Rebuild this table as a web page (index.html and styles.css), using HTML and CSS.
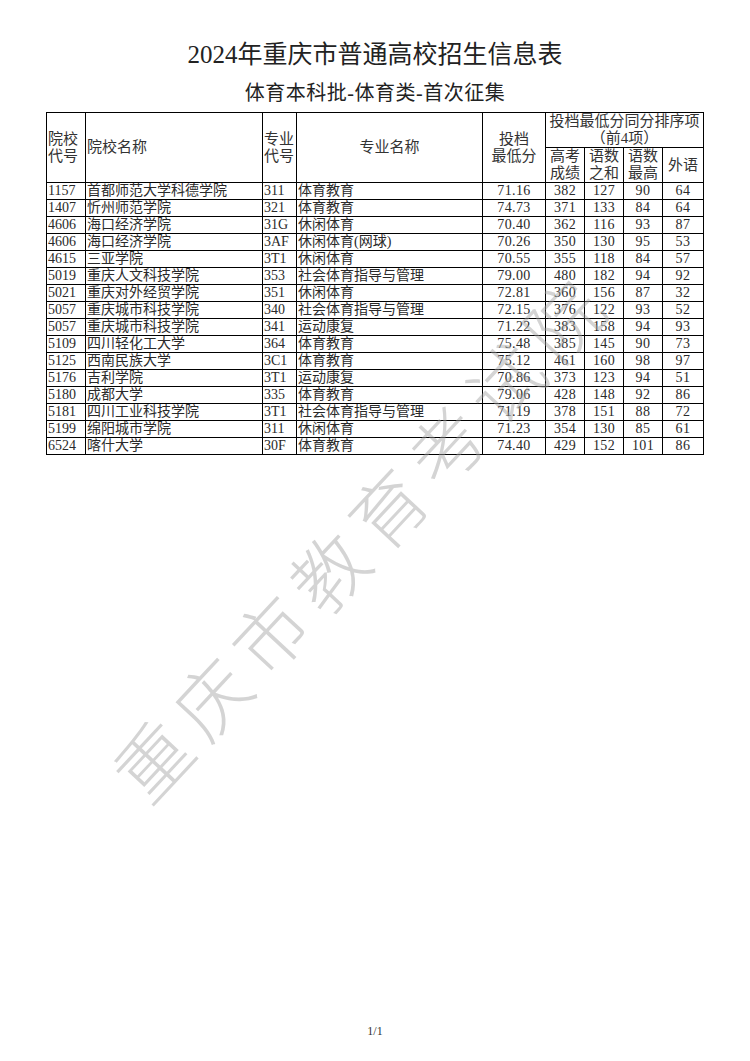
FILE: index.html
```html
<!DOCTYPE html>
<html lang="zh-CN">
<head>
<meta charset="utf-8">
<title>2024年重庆市普通高校招生信息表</title>
<link rel="stylesheet" href="styles.css">
</head>
<body>
<div class="page">
  <h1 class="title">2024年重庆市普通高校招生信息表</h1>
  <h2 class="subtitle">体育本科批-体育类-首次征集</h2>
  <table class="grid">
    <colgroup>
      <col class="c-code"><col class="c-school"><col class="c-mcode"><col class="c-major">
      <col class="c-score"><col class="c-s"><col class="c-s"><col class="c-s"><col class="c-last">
    </colgroup>
    <thead>
      <tr class="h1">
        <th rowspan="2" class="left">院校<br>代号</th>
        <th rowspan="2" class="left">院校名称</th>
        <th rowspan="2" class="left">专业<br>代号</th>
        <th rowspan="2">专业名称</th>
        <th rowspan="2">投档<br>最低分</th>
        <th colspan="4">投档最低分同分排序项<br>（前4项）</th>
      </tr>
      <tr class="h2">
        <th>高考<br>成绩</th>
        <th>语数<br>之和</th>
        <th>语数<br>最高</th>
        <th>外语</th>
      </tr>
    </thead>
    <tbody>
      <tr><td>1157</td><td>首都师范大学科德学院</td><td>311</td><td>体育教育</td><td class="n">71.16</td><td class="n">382</td><td class="n">127</td><td class="n">90</td><td class="n">64</td></tr>
      <tr><td>1407</td><td>忻州师范学院</td><td>321</td><td>体育教育</td><td class="n">74.73</td><td class="n">371</td><td class="n">133</td><td class="n">84</td><td class="n">64</td></tr>
      <tr><td>4606</td><td>海口经济学院</td><td>31G</td><td>休闲体育</td><td class="n">70.40</td><td class="n">362</td><td class="n">116</td><td class="n">93</td><td class="n">87</td></tr>
      <tr><td>4606</td><td>海口经济学院</td><td>3AF</td><td>休闲体育(网球)</td><td class="n">70.26</td><td class="n">350</td><td class="n">130</td><td class="n">95</td><td class="n">53</td></tr>
      <tr><td>4615</td><td>三亚学院</td><td>3T1</td><td>休闲体育</td><td class="n">70.55</td><td class="n">355</td><td class="n">118</td><td class="n">84</td><td class="n">57</td></tr>
      <tr><td>5019</td><td>重庆人文科技学院</td><td>353</td><td>社会体育指导与管理</td><td class="n">79.00</td><td class="n">480</td><td class="n">182</td><td class="n">94</td><td class="n">92</td></tr>
      <tr><td>5021</td><td>重庆对外经贸学院</td><td>351</td><td>休闲体育</td><td class="n">72.81</td><td class="n">360</td><td class="n">156</td><td class="n">87</td><td class="n">32</td></tr>
      <tr><td>5057</td><td>重庆城市科技学院</td><td>340</td><td>社会体育指导与管理</td><td class="n">72.15</td><td class="n">376</td><td class="n">122</td><td class="n">93</td><td class="n">52</td></tr>
      <tr><td>5057</td><td>重庆城市科技学院</td><td>341</td><td>运动康复</td><td class="n">71.22</td><td class="n">383</td><td class="n">158</td><td class="n">94</td><td class="n">93</td></tr>
      <tr><td>5109</td><td>四川轻化工大学</td><td>364</td><td>体育教育</td><td class="n">75.48</td><td class="n">385</td><td class="n">145</td><td class="n">90</td><td class="n">73</td></tr>
      <tr><td>5125</td><td>西南民族大学</td><td>3C1</td><td>体育教育</td><td class="n">75.12</td><td class="n">461</td><td class="n">160</td><td class="n">98</td><td class="n">97</td></tr>
      <tr><td>5176</td><td>吉利学院</td><td>3T1</td><td>运动康复</td><td class="n">70.86</td><td class="n">373</td><td class="n">123</td><td class="n">94</td><td class="n">51</td></tr>
      <tr><td>5180</td><td>成都大学</td><td>335</td><td>体育教育</td><td class="n">79.06</td><td class="n">428</td><td class="n">148</td><td class="n">92</td><td class="n">86</td></tr>
      <tr><td>5181</td><td>四川工业科技学院</td><td>3T1</td><td>社会体育指导与管理</td><td class="n">71.19</td><td class="n">378</td><td class="n">151</td><td class="n">88</td><td class="n">72</td></tr>
      <tr><td>5199</td><td>绵阳城市学院</td><td>311</td><td>休闲体育</td><td class="n">71.23</td><td class="n">354</td><td class="n">130</td><td class="n">85</td><td class="n">61</td></tr>
      <tr><td>6524</td><td>喀什大学</td><td>30F</td><td>体育教育</td><td class="n">74.40</td><td class="n">429</td><td class="n">152</td><td class="n">101</td><td class="n">86</td></tr>
    </tbody>
  </table>
  <div class="footer">1/1</div>
  <div class="watermark" aria-hidden="true">重庆市教育考试院</div>
</div>
</body>
</html>
```

FILE: styles.css
```css
html, body {
  margin: 0;
  padding: 0;
  background: #fff;
}

body {
  font-family: "Liberation Serif", "Noto Sans CJK SC", serif;
  color: #222;
}

.page {
  position: relative;
  width: 750px;
  height: 1061px;
  overflow: hidden;
  display: flex;
  flex-direction: column;
  align-items: center;
}

.title {
  margin: 40px 0 0;
  font-size: 25px;
  line-height: 30px;
  font-weight: 400;
  color: #222;
}

.subtitle {
  margin: 11px 0 0;
  font-size: 20px;
  line-height: 24px;
  font-weight: 400;
  color: #222;
  letter-spacing: 0.5px;
}

.grid {
  margin-top: 7px;
  width: 657px;
  border-collapse: collapse;
  table-layout: fixed;
  font-size: 14px;
}

.c-code { width: 39px; }
.c-school { width: 177px; }
.c-mcode { width: 34px; }
.c-major { width: 186px; }
.c-score { width: 63px; }
.c-s { width: 39px; }
.c-last { width: 41px; }

.grid th,
.grid td {
  border: 1px solid #000;
  padding: 0 1px;
  overflow: hidden;
  white-space: nowrap;
}

.grid th {
  font-weight: 400;
  font-size: 15px;
  line-height: 17px;
  text-align: center;
  vertical-align: middle;
  color: #333;
}

.grid th.left {
  text-align: left;
}

.h1 { height: 34px; }
.h2 { height: 35px; }

.grid td {
  height: 16px;
  line-height: 16px;
  text-align: left;
  color: #2a2a2a;
}

.grid td.n {
  text-align: center;
  letter-spacing: 0.4px;
}

.footer {
  position: absolute;
  left: 0;
  right: 0;
  top: 1024px;
  text-align: center;
  font-size: 12px;
  color: #333;
}

.watermark {
  position: absolute;
  left: 360px;
  top: 534px;
  transform: translate(-50%, -50%) rotate(-47deg);
  font-family: "Noto Sans CJK SC", sans-serif;
  font-weight: 300;
  font-size: 74px;
  line-height: 1;
  letter-spacing: 12px;
  white-space: nowrap;
  color: rgba(160, 160, 160, 0.45);
  pointer-events: none;
}
```
